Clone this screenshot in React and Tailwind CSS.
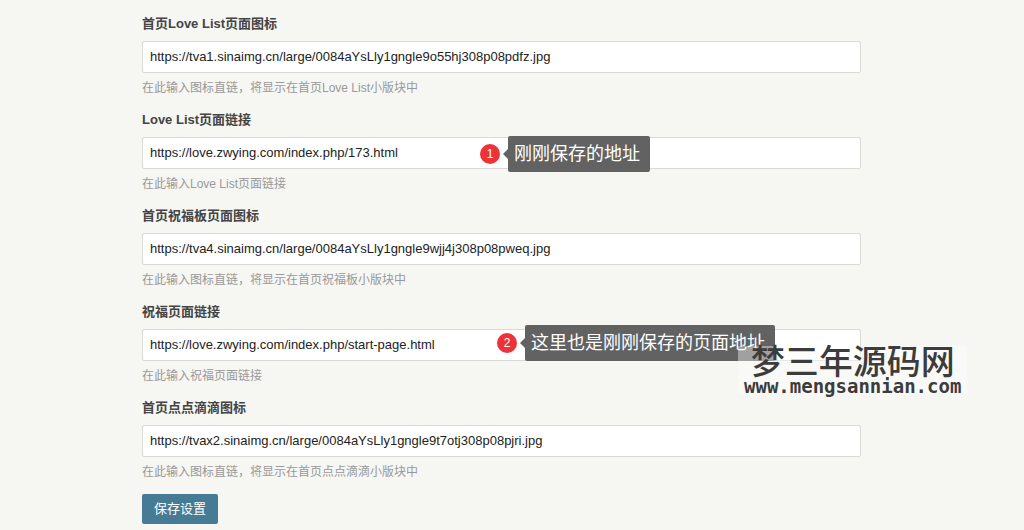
import React, { useState } from 'react';

const FIELDS = [
  {
    id: 'loveListIcon',
    label: '首页Love List页面图标',
    value: 'https://tva1.sinaimg.cn/large/0084aYsLly1gngle9o55hj308p08pdfz.jpg',
    description: '在此输入图标直链，将显示在首页Love List小版块中',
  },
  {
    id: 'loveListLink',
    label: 'Love List页面链接',
    value: 'https://love.zwying.com/index.php/173.html',
    description: '在此输入Love List页面链接',
    callout: { number: 1, text: '刚刚保存的地址', position: 'left-[338px] -top-px' },
  },
  {
    id: 'blessingIcon',
    label: '首页祝福板页面图标',
    value: 'https://tva4.sinaimg.cn/large/0084aYsLly1gngle9wjj4j308p08pweq.jpg',
    description: '在此输入图标直链，将显示在首页祝福板小版块中',
  },
  {
    id: 'blessingLink',
    label: '祝福页面链接',
    value: 'https://love.zwying.com/index.php/start-page.html',
    description: '在此输入祝福页面链接',
    callout: { number: 2, text: '这里也是刚刚保存的页面地址', position: 'left-[355px] -top-1' },
  },
  {
    id: 'momentsIcon',
    label: '首页点点滴滴图标',
    value: 'https://tvax2.sinaimg.cn/large/0084aYsLly1gngle9t7otj308p08pjri.jpg',
    description: '在此输入图标直链，将显示在首页点点滴滴小版块中',
  },
];

function Callout({ number, text, position }) {
  return (
    <div className={`absolute flex items-center whitespace-nowrap ${position}`}>
      <span className="flex h-5 w-5 items-center justify-center rounded-full bg-[#ee3338] text-xs text-white">
        {number}
      </span>
      <svg width="5" height="10" viewBox="0 0 5 10" className="ml-[3px] fill-[#626262]">
        <path d="M5 0v10L0 5z" />
      </svg>
      <span className="rounded-xs bg-[#626262] py-1 pr-2.5 pl-1.5 text-lg leading-7 text-white">
        {text}
      </span>
    </div>
  );
}

function Field({ field, value, onChange }) {
  return (
    <div className="mb-3">
      <label htmlFor={field.id} className="block text-[13px] leading-5 font-bold text-[#444]">
        {field.label}
      </label>
      <div className="relative mt-[7px]">
        <input
          id={field.id}
          type="text"
          value={value}
          onChange={(e) => onChange(field.id, e.target.value)}
          aria-describedby={`${field.id}-description`}
          className="block h-8 w-full rounded-xs border border-[#d9d9d6] bg-white px-[7px] pb-0.5 text-[13px] text-[#222]"
        />
        {field.callout && <Callout {...field.callout} />}
      </div>
      <p id={`${field.id}-description`} className="mt-[5px] text-xs leading-5 text-[#999]">
        {field.description}
      </p>
    </div>
  );
}

function Watermark() {
  return (
    <div className="pointer-events-none absolute top-[346px] left-[738px] bg-white/40 px-1.5 text-center whitespace-nowrap text-[#3c3c3c]">
      <div className="text-[34px] leading-8 font-medium">梦三年源码网</div>
      <div className="font-['DejaVu_Sans_Mono',monospace] text-[19px] leading-4 font-bold">
        www.mengsannian.com
      </div>
    </div>
  );
}

export default function App() {
  const [values, setValues] = useState(() =>
    Object.fromEntries(FIELDS.map((field) => [field.id, field.value]))
  );

  const handleChange = (id, value) => {
    setValues((prev) => ({ ...prev, [id]: value }));
  };

  return (
    <div className="relative min-h-screen bg-[#f6f6f3] font-['Liberation_Sans','Noto_Sans_CJK_SC',sans-serif]">
      <form
        onSubmit={(e) => e.preventDefault()}
        className="pt-3.5 pr-[163px] pb-1.5 pl-[142px]"
      >
        {FIELDS.map((field) => (
          <Field key={field.id} field={field} value={values[field.id]} onChange={handleChange} />
        ))}
        <button
          type="submit"
          className="block h-[30px] rounded-xs bg-[#467b96] px-3 text-[13px] text-white"
        >
          保存设置
        </button>
      </form>
      <Watermark />
    </div>
  );
}
